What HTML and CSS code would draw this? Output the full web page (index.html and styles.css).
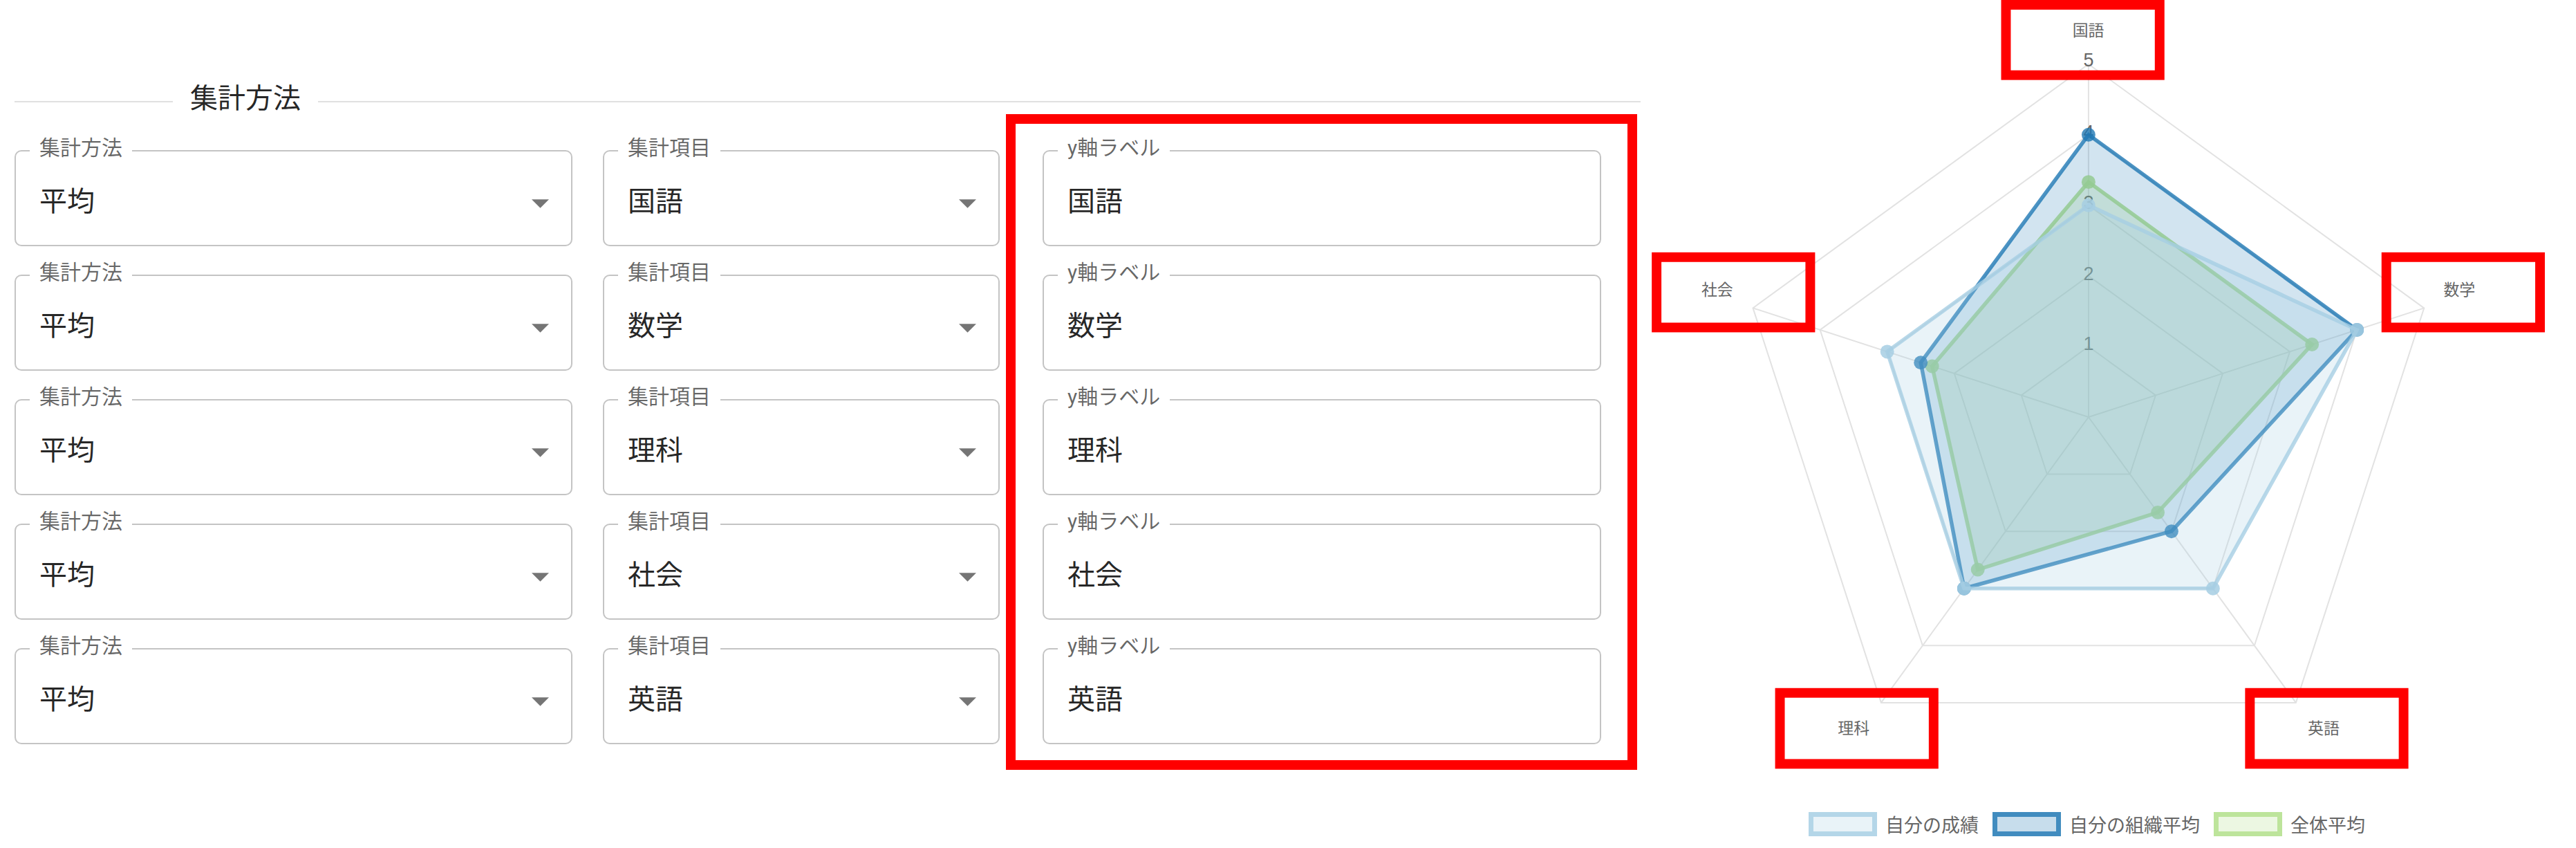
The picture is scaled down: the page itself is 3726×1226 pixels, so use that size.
FILE: index.html
```html
<!DOCTYPE html>
<html lang="ja">
<head>
<meta charset="utf-8">
<title>集計方法</title>
<link rel="stylesheet" href="styles.css">
</head>
<body>
<main class="page">
  <section class="settings">
    <div class="divider">
      <span class="divider-line divider-line--left"></span>
      <h2 class="divider-title">集計方法</h2>
      <span class="divider-line divider-line--right"></span>
    </div>
    <div class="fields">
      <div class="col col--method">
        <fieldset class="field"><legend class="field-label">集計方法</legend><div class="field-body"><span class="field-value">平均</span><svg class="select-arrow" viewBox="7 10 10 5" width="25" height="13"><path d="M7 10l5 5 5-5z"/></svg></div></fieldset>
        <fieldset class="field"><legend class="field-label">集計方法</legend><div class="field-body"><span class="field-value">平均</span><svg class="select-arrow" viewBox="7 10 10 5" width="25" height="13"><path d="M7 10l5 5 5-5z"/></svg></div></fieldset>
        <fieldset class="field"><legend class="field-label">集計方法</legend><div class="field-body"><span class="field-value">平均</span><svg class="select-arrow" viewBox="7 10 10 5" width="25" height="13"><path d="M7 10l5 5 5-5z"/></svg></div></fieldset>
        <fieldset class="field"><legend class="field-label">集計方法</legend><div class="field-body"><span class="field-value">平均</span><svg class="select-arrow" viewBox="7 10 10 5" width="25" height="13"><path d="M7 10l5 5 5-5z"/></svg></div></fieldset>
        <fieldset class="field"><legend class="field-label">集計方法</legend><div class="field-body"><span class="field-value">平均</span><svg class="select-arrow" viewBox="7 10 10 5" width="25" height="13"><path d="M7 10l5 5 5-5z"/></svg></div></fieldset>
      </div>
      <div class="col col--item">
        <fieldset class="field"><legend class="field-label">集計項目</legend><div class="field-body"><span class="field-value">国語</span><svg class="select-arrow" viewBox="7 10 10 5" width="25" height="13"><path d="M7 10l5 5 5-5z"/></svg></div></fieldset>
        <fieldset class="field"><legend class="field-label">集計項目</legend><div class="field-body"><span class="field-value">数学</span><svg class="select-arrow" viewBox="7 10 10 5" width="25" height="13"><path d="M7 10l5 5 5-5z"/></svg></div></fieldset>
        <fieldset class="field"><legend class="field-label">集計項目</legend><div class="field-body"><span class="field-value">理科</span><svg class="select-arrow" viewBox="7 10 10 5" width="25" height="13"><path d="M7 10l5 5 5-5z"/></svg></div></fieldset>
        <fieldset class="field"><legend class="field-label">集計項目</legend><div class="field-body"><span class="field-value">社会</span><svg class="select-arrow" viewBox="7 10 10 5" width="25" height="13"><path d="M7 10l5 5 5-5z"/></svg></div></fieldset>
        <fieldset class="field"><legend class="field-label">集計項目</legend><div class="field-body"><span class="field-value">英語</span><svg class="select-arrow" viewBox="7 10 10 5" width="25" height="13"><path d="M7 10l5 5 5-5z"/></svg></div></fieldset>
      </div>
      <div class="col col--label">
        <fieldset class="field"><legend class="field-label">y軸ラベル</legend><div class="field-body"><span class="field-value">国語</span></div></fieldset>
        <fieldset class="field"><legend class="field-label">y軸ラベル</legend><div class="field-body"><span class="field-value">数学</span></div></fieldset>
        <fieldset class="field"><legend class="field-label">y軸ラベル</legend><div class="field-body"><span class="field-value">理科</span></div></fieldset>
        <fieldset class="field"><legend class="field-label">y軸ラベル</legend><div class="field-body"><span class="field-value">社会</span></div></fieldset>
        <fieldset class="field"><legend class="field-label">y軸ラベル</legend><div class="field-body"><span class="field-value">英語</span></div></fieldset>
        <div class="annotation"></div>
      </div>
    </div>
  </section>

  <section class="chart">
    <svg class="radar" viewBox="2373 0 1353 1160" width="1353" height="1160">
      <g class="grid">
        <polygon points="3020.8,502.6 3118.19,573.36 3080.99,687.84 2960.61,687.84 2923.41,573.36"/>
        <polygon points="3020.8,400.2 3215.58,541.71 3141.18,770.69 2900.42,770.69 2826.02,541.71"/>
        <polygon points="3020.8,297.8 3312.96,510.07 3201.37,853.53 2840.23,853.53 2728.64,510.07"/>
        <polygon points="3020.8,195.4 3410.35,478.43 3261.56,936.37 2780.04,936.37 2631.25,478.43"/>
        <polygon points="3020.8,93 3507.74,446.78 3321.75,1019.22 2719.85,1019.22 2533.86,446.78"/>
        <line x1="3020.8" y1="605" x2="3020.8" y2="93"/>
        <line x1="3020.8" y1="605" x2="3507.74" y2="446.78"/>
        <line x1="3020.8" y1="605" x2="3321.75" y2="1019.22"/>
        <line x1="3020.8" y1="605" x2="2719.85" y2="1019.22"/>
        <line x1="3020.8" y1="605" x2="2533.86" y2="446.78"/>
      </g>
      <g class="ticks">
        <text x="3020.8" y="499">1</text>
        <text x="3020.8" y="397">2</text>
        <text x="3020.8" y="294">3</text>
        <text x="3020.8" y="192">4</text>
        <text x="3020.8" y="87">5</text>
      </g>
      <g class="dataset dataset--green">
        <polygon points="3020.8,264 3345.1,499.6 3121.3,743.3 2860.1,826.2 2793.9,531.3"/>
        <circle cx="3020.8" cy="264" r="10"/>
        <circle cx="3345.1" cy="499.6" r="10"/>
        <circle cx="3121.3" cy="743.3" r="10"/>
        <circle cx="2860.1" cy="826.2" r="10"/>
        <circle cx="2793.9" cy="531.3" r="10"/>
      </g>
      <g class="dataset dataset--dark">
        <polygon points="3020.8,195.4 3410.35,478.43 3141.18,770.69 2840.23,853.53 2777.33,525.89"/>
        <circle cx="3020.8" cy="195.4" r="10"/>
        <circle cx="3410.35" cy="478.43" r="10"/>
        <circle cx="3141.18" cy="770.69" r="10"/>
        <circle cx="2840.23" cy="853.53" r="10"/>
        <circle cx="2777.33" cy="525.89" r="10"/>
      </g>
      <g class="dataset dataset--light">
        <polygon points="3020.8,297.8 3410.35,478.43 3201.37,853.53 2840.23,853.53 2728.64,510.07"/>
        <circle cx="3020.8" cy="297.8" r="10"/>
        <circle cx="3410.35" cy="478.43" r="10"/>
        <circle cx="3201.37" cy="853.53" r="10"/>
        <circle cx="2840.23" cy="853.53" r="10"/>
        <circle cx="2728.64" cy="510.07" r="10"/>
      </g>
      <g class="point-labels">
        <text x="3020.5" y="44">国語</text>
        <text x="3559" y="420">数学</text>
        <text x="3362" y="1056">英語</text>
        <text x="2680" y="1056">理科</text>
        <text x="2482" y="420">社会</text>
      </g>
      <g class="annotation-boxes">
        <rect x="2901" y="7" width="223" height="102"/>
        <rect x="3453" y="373" width="223" height="102"/>
        <rect x="3255" y="1005" width="223" height="103"/>
        <rect x="2573" y="1005" width="223" height="103"/>
        <rect x="2394" y="373" width="223" height="102"/>
      </g>
    </svg>
    <ul class="legend">
      <li class="legend-item"><span class="legend-swatch legend-swatch--light"></span><span class="legend-text">自分の成績</span></li>
      <li class="legend-item"><span class="legend-swatch legend-swatch--dark"></span><span class="legend-text">自分の組織平均</span></li>
      <li class="legend-item"><span class="legend-swatch legend-swatch--green"></span><span class="legend-text">全体平均</span></li>
    </ul>
  </section>
</main>
</body>
</html>
```

FILE: styles.css
```css
html, body {
  margin: 0;
  padding: 0;
  background: #ffffff;
  overflow: hidden;
}

body {
  font-family: Roboto, "Noto Sans CJK JP", sans-serif;
  color: rgba(0, 0, 0, 0.87);
}

.page {
  display: flex;
  align-items: flex-start;
  width: 3726px;
  height: 1226px;
}

/* ---------- settings panel ---------- */
.settings {
  width: 2352px;
  margin-left: 21px;
  padding-top: 118px;
  flex: none;
}

.divider {
  display: flex;
  align-items: center;
  height: 58px;
}

.divider-line {
  height: 0;
  border-top: 2px solid rgba(0, 0, 0, 0.12);
}

.divider-line--left {
  width: 229px;
}

.divider-line--right {
  flex: 1;
}

.divider-title {
  margin: 0;
  padding: 0 25px 8px;
  font-size: 40px;
  line-height: 50px;
  font-weight: 400;
  white-space: nowrap;
}

.fields {
  display: flex;
  gap: 44px;
  margin-top: 23px;
  align-items: flex-start;
}

.col {
  display: flex;
  flex-direction: column;
  gap: 23px;
}

.col--method { width: 807px; }
.col--item { width: 574px; }
.col--label {
  width: 808px;
  margin-left: 18px;
  position: relative;
}

.field {
  margin: 0;
  padding: 0 20px;
  min-width: 0;
  border: 2px solid #c4c4c4;
  border-radius: 10px;
}

.field-label {
  padding: 0 14px 8px;
  font-size: 30px;
  line-height: 30px;
  color: rgba(0, 0, 0, 0.6);
  white-space: nowrap;
}

.field-body {
  height: 117px;
  box-sizing: border-box;
  display: flex;
  align-items: center;
  justify-content: space-between;
  padding: 0 12px 7px 14px;
}

.field-value {
  font-size: 40px;
  line-height: 50px;
  white-space: nowrap;
}

.select-arrow {
  display: block;
  fill: rgba(0, 0, 0, 0.54);
  margin-top: 4px;
}

.annotation {
  position: absolute;
  top: -34px;
  left: -53px;
  right: -52px;
  bottom: -37px;
  border: 14px solid #ff0000;
  pointer-events: none;
}

/* ---------- chart ---------- */
.chart {
  flex: 1;
  display: flex;
  flex-direction: column;
  height: 1226px;
}

.radar {
  display: block;
  font-family: "Liberation Sans", "Noto Sans CJK JP", sans-serif;
}

.grid polygon,
.grid line {
  fill: none;
  stroke: #e2e2e2;
  stroke-width: 2;
}

.ticks text {
  font-size: 27px;
  fill: #666666;
  text-anchor: middle;
  dominant-baseline: central;
}

.dataset polygon {
  stroke-width: 5.5;
  stroke-linejoin: miter;
}

.dataset--green polygon {
  fill: rgba(178, 223, 138, 0.25);
  stroke: rgba(178, 223, 138, 0.85);
}
.dataset--green circle { fill: rgba(178, 223, 138, 0.85); }

.dataset--dark polygon {
  fill: rgba(31, 120, 180, 0.2);
  stroke: rgba(31, 120, 180, 0.8);
}
.dataset--dark circle { fill: rgba(31, 120, 180, 0.8); }

.dataset--light polygon {
  fill: rgba(166, 206, 227, 0.25);
  stroke: rgba(166, 206, 227, 0.8);
}
.dataset--light circle { fill: rgba(166, 206, 227, 0.85); }

.point-labels text {
  font-size: 23px;
  fill: #666666;
  text-anchor: middle;
  dominant-baseline: central;
}

.annotation-boxes rect {
  fill: none;
  stroke: #ff0000;
  stroke-width: 14;
}

.legend {
  list-style: none;
  margin: 0;
  padding: 0 62px 0 0;
  height: 70px;
  display: flex;
  align-items: center;
  justify-content: center;
  gap: 20px;
  font-family: "Liberation Sans", "Noto Sans CJK JP", sans-serif;
}

.legend-item {
  display: flex;
  align-items: center;
}

.legend-swatch {
  width: 99px;
  height: 35px;
  box-sizing: border-box;
  border: 7px solid;
}

.legend-swatch--light {
  background: rgba(166, 206, 227, 0.25);
  border-color: rgba(166, 206, 227, 0.8);
}

.legend-swatch--dark {
  background: rgba(31, 120, 180, 0.25);
  border-color: rgba(31, 120, 180, 0.8);
}

.legend-swatch--green {
  background: rgba(178, 223, 138, 0.25);
  border-color: rgba(178, 223, 138, 0.8);
}

.legend-text {
  margin-left: 12px;
  font-size: 27px;
  color: #666666;
  white-space: nowrap;
}
```
